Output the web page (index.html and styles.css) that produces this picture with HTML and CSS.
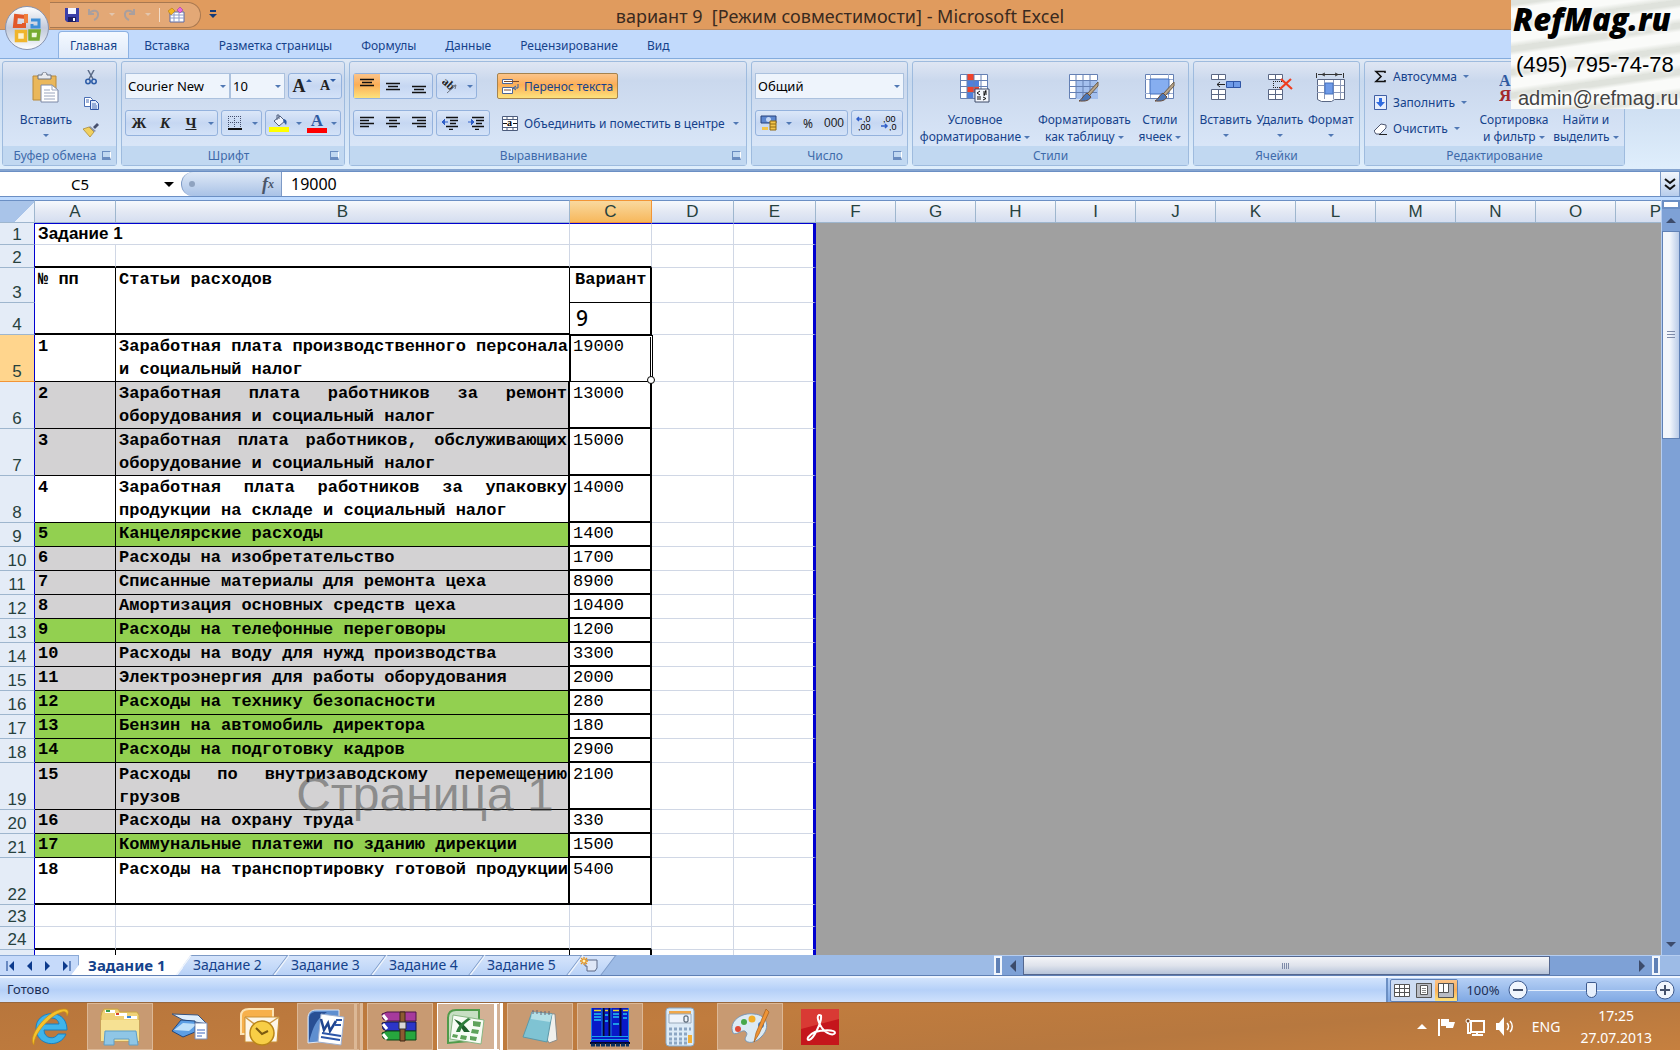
FILE: index.html
```html
<!DOCTYPE html>
<html lang="ru">

<head>
  <meta charset="UTF-8">
  <meta name="viewport" content="width=device-width, initial-scale=1.0">
  <title>вариант 9 - Microsoft Excel</title>
  <link rel="stylesheet" href="styles.css">
</head>

<body>
  <header class="titlebar">
    <div class="quick">
      <button aria-label="Сохранить"><svg width="14" height="14" viewBox="0 0 14 14"><path d="M0 0h14v14H2L0 12z" fill="#3b3fa8"/><path d="M3 0h8v6H3z" fill="#f4f6ff"/><path d="M3 9h8v5H3z" fill="#1d1f66"/><path d="M8 10h2v3H8z" fill="#fff"/></svg></button>
      <button aria-label="Отменить"><svg width="14" height="14" viewBox="0 0 14 14"><path d="M2 1v5h5M2 6c3-5 10-4 9 1 0 2-2 4-4 5" fill="none" stroke="#a99f9e" stroke-width="2"/></svg></button>
      <span class="caret pale"></span>
      <button aria-label="Вернуть"><svg width="14" height="14" viewBox="0 0 14 14"><path d="M11 1v5H6M11 6C8 1 1 2 2 7c0 2 2 4 4 5" fill="none" stroke="#a99f9e" stroke-width="2"/></svg></button>
      <span class="caret pale"></span>
      <span class="quick-line"></span>
      <button aria-label="Форма"><svg width="18" height="16" viewBox="0 0 18 16"><path d="M2 5h14v10H2z" fill="#fff" stroke="#5b6aa6"/><path d="M2 8h14M2 11h14M6 5v10M11 5v10" stroke="#8f9bc8"/><path d="M0 4l4-3 3 3-4 4z" fill="#f5b51e" stroke="#b07a10" stroke-width=".6"/><path d="M9 3l3-3 3 3-3 3z" fill="#e66be0" stroke="#a23ba0" stroke-width=".6"/></svg></button>
    </div>
    <button class="quick-more" aria-label="Настройка панели"><svg width="8" height="9"><path d="M1 1h6" stroke="#123a78" stroke-width="2"/><path d="M0 4h8L4 8z" fill="#123a78"/></svg></button>
    <h1>вариант 9&nbsp; [Режим совместимости] - Microsoft Excel</h1>
  </header>

  <button class="office" aria-label="Office">
    <svg width="46" height="46" viewBox="0 0 46 46">
      <defs>
        <linearGradient id="orb" x1="0" y1="0" x2="0" y2="1"><stop offset="0" stop-color="#fff"/><stop offset=".5" stop-color="#c3cadb"/><stop offset=".7" stop-color="#d5dce8"/><stop offset="1" stop-color="#fff"/></linearGradient>
      </defs>
      <circle cx="23" cy="23" r="21.500" fill="url(#orb)" stroke="#8793ae"/>
      <path d="M22 12l-10-1-1 10h9v-3" fill="none" stroke="#e2582a" stroke-width="4"/>
      <path d="M20 9h4v9h-4z" fill="#f0803c"/>
      <path d="M27 15h8v7h-7v-3" fill="none" stroke="#3d8fd8" stroke-width="3"/>
      <path d="M12.500 26.500h9v9h-9z" fill="#fdf3cf" stroke="#f0b52c" stroke-width="3.500"/>
      <path d="M26 26h9l-1 8h-8z" fill="#eef7dc" stroke="#76ab30" stroke-width="3.500"/>
    </svg>
  </button>

  <nav class="tabs">
    <a href="#" class="active">Главная</a>
    <a href="#">Вставка</a>
    <a href="#">Разметка страницы</a>
    <a href="#">Формулы</a>
    <a href="#">Данные</a>
    <a href="#">Рецензирование</a>
    <a href="#">Вид</a>
  </nav>

  <section class="ribbon">
    <div class="group g-clip">
      <div class="tools">
        <button class="big">
          <svg width="28" height="32" viewBox="0 0 28 32"><path d="M1 4h23v24H1z" fill="#eab75a" stroke="#b98a3a"/><path d="M6 3h4c0-4 5-4 5 0h4v4H6z" fill="#e9ebef" stroke="#6b7280"/><path d="M9 13h11l6 5v12H9z" fill="#fff" stroke="#7c88a5"/><path d="M20 13v5h6M12 18h6M12 21h11M12 24h11M12 27h11" fill="none" stroke="#9aa5bd"/></svg>
          <span>Вставить</span><span class="caret"></span>
        </button>
        <div class="stack">
          <button aria-label="Вырезать"><svg width="12" height="15" viewBox="0 0 12 15"><path d="M3 0l5 9M9 0L4 9" stroke="#5a6a86" stroke-width="1.500"/><circle cx="3" cy="11.500" r="2.200" fill="none" stroke="#2f5ea8" stroke-width="1.600"/><circle cx="9" cy="11.500" r="2.200" fill="none" stroke="#2f5ea8" stroke-width="1.600"/></svg></button>
          <button aria-label="Копировать"><svg width="15" height="13" viewBox="0 0 15 13"><path d="M.5.500h6l2 2v7h-8z" fill="#fff" stroke="#4a6fb5"/><path d="M6.500 3.500h5l3 3v6h-8z" fill="#dfe9fb" stroke="#2f55a5"/><path d="M2 3h3M2 5h3M8 7h4M8 9h5M8 11h5" stroke="#4a6fb5"/></svg></button>
          <button aria-label="Формат по образцу"><svg width="16" height="14" viewBox="0 0 16 14"><path d="M10 4l4-4 2 2-4 4z" fill="#47506e"/><path d="M7 3l6 5-2 1-5-5z" fill="#8d94a8"/><path d="M0 6l6-2 5 5-4 5z" fill="#f0d060" stroke="#a5822a" stroke-width=".7"/></svg></button>
        </div>
      </div>
      <div class="caption"><span>Буфер обмена</span><button class="launch" aria-label="Буфер обмена"></button></div>
    </div>

    <div class="group g-font">
      <div class="tools rows">
        <div class="line">
          <div class="combo-pair">
            <div class="combo c-font"><select aria-label="Шрифт"><option>Courier New</option></select></div>
            <div class="combo c-size"><select aria-label="Размер"><option>10</option></select></div>
          </div>
          <div class="set push">
            <button class="serif grow-a" aria-label="Увеличить размер">A<span class="tri up"></span></button>
            <button class="serif shrink-a" aria-label="Уменьшить размер">A<span class="tri"></span></button>
          </div>
        </div>
        <div class="line">
          <div class="set">
            <button class="serif">Ж</button><button class="serif it">К</button><button class="serif un">Ч</button>
            <span class="caret"></span>
          </div>
          <div class="set">
            <button aria-label="Границы"><svg width="14" height="14" viewBox="0 0 14 14"><path d="M.5 0v13M6.500 0v13M12.500 0v13M0 .5h13M0 6.500h13" stroke="#44506e" stroke-dasharray="1 1"/><path d="M0 13h14" stroke="#111" stroke-width="2"/></svg></button>
            <span class="caret"></span>
          </div>
          <div class="set">
            <button aria-label="Цвет заливки"><svg width="20" height="19" viewBox="0 0 20 19"><path d="M5 7l6-5 5 5-6 5z" fill="#eef2fa" stroke="#51607f"/><path d="M8 6V1h2v4" fill="none" stroke="#51607f"/><path d="M15 5c3 1 3 3 2 6l-3-4z" fill="#2f5ea8"/><path d="M0 13h20v5H0z" fill="#ff0"/></svg></button>
            <span class="caret"></span>
            <button aria-label="Цвет текста" class="serif font-color">A</button>
            <span class="caret"></span>
          </div>
        </div>
      </div>
      <div class="caption"><span>Шрифт</span><button class="launch" aria-label="Шрифт"></button></div>
    </div>

    <div class="group g-align">
      <div class="tools">
        <div class="rows">
          <div class="line">
            <div class="set">
              <button class="on" aria-label="По верхнему краю"><svg width="16" height="16"><path d="M1 1.500h14M3 4.500h10M1 7.500h14" stroke="#111" stroke-width="1.500"/></svg></button>
              <button aria-label="По середине"><svg width="16" height="16"><path d="M1 5.500h14M3 8.500h10M1 11.500h14" stroke="#111" stroke-width="1.500"/></svg></button>
              <button aria-label="По нижнему краю"><svg width="16" height="16"><path d="M1 8.500h14M3 11.500h10M1 14.500h14" stroke="#111" stroke-width="1.500"/></svg></button>
            </div>
            <div class="set">
              <button aria-label="Ориентация"><svg width="16" height="16" viewBox="0 0 16 16"><text x="-1" y="9" font-family="Liberation Serif" font-size="12" font-weight="bold" transform="rotate(42 5 7)" fill="#222">ab</text><path d="M5 15l9-8M14 7l-4 1M14 7l-1 4" fill="none" stroke="#6d7480"/></svg></button>
              <span class="caret"></span>
            </div>
          </div>
          <div class="line">
            <div class="set">
              <button aria-label="По левому краю"><svg width="16" height="14"><path d="M1 1.500h14M1 4.500h9M1 7.500h14M1 10.500h9" stroke="#111" stroke-width="1.500"/></svg></button>
              <button aria-label="По центру"><svg width="16" height="14"><path d="M1 1.500h14M4 4.500h8M1 7.500h14M4 10.500h8" stroke="#111" stroke-width="1.500"/></svg></button>
              <button aria-label="По правому краю"><svg width="16" height="14"><path d="M1 1.500h14M6 4.500h9M1 7.500h14M6 10.500h9" stroke="#111" stroke-width="1.500"/></svg></button>
            </div>
            <div class="set">
              <button aria-label="Уменьшить отступ"><svg width="16" height="14"><path d="M4 1.500h12M8 4.500h8M8 7.500h6M4 10.500h12M7 13.500h4" stroke="#111" stroke-width="1.500"/><path d="M6 6H1M3 3L0 6l3 3" stroke="#2f5ec8" fill="#2f5ec8"/></svg></button>
              <button aria-label="Увеличить отступ"><svg width="16" height="14"><path d="M4 1.500h12M8 4.500h8M8 7.500h6M4 10.500h12M7 13.500h4" stroke="#111" stroke-width="1.500"/><path d="M0 6h5M3 3l3 3-3 3" stroke="#2f5ec8" fill="#2f5ec8"/></svg></button>
            </div>
          </div>
        </div>
        <div class="rule"></div>
        <div class="rows">
          <button class="wide on">
            <svg width="17" height="17" viewBox="0 0 17 17"><path d="M.5 1.500h10v4H.5zM.5 9.500h10v6H.5z" fill="#fff" stroke="#4c6596"/><path d="M2 3.500h15M2 12h7" stroke="#7a4a2a"/><path d="M16 6v4h-4M14 8l-3 2 3 2" fill="none" stroke="#2f5ea8"/></svg>
            Перенос текста
          </button>
          <button class="wide">
            <svg width="17" height="15" viewBox="0 0 17 15"><path d="M.5.500h15v14H.5z" fill="#fff" stroke="#4c5c7c"/><path d="M0 3.500h16M0 11.500h16M5 0v3M11 0v3M5 12v3M11 12v3" stroke="#4c5c7c"/><path d="M1 7.500h4M11 7.500h4" stroke="#111"/><text x="5" y="10" font-family="Liberation Serif" font-size="10" font-weight="bold">a</text></svg>
            Объединить и поместить в центре <span class="caret"></span>
          </button>
        </div>
      </div>
      <div class="caption"><span>Выравнивание</span><button class="launch" aria-label="Выравнивание"></button></div>
    </div>

    <div class="group g-num">
      <div class="tools rows">
        <div class="combo"><select aria-label="Числовой формат"><option>Общий</option></select></div>
        <div class="line">
          <div class="set">
            <button aria-label="Денежный формат"><svg width="18" height="16" viewBox="0 0 18 16"><path d="M1 1h15v7H1z" fill="#5d87cf" stroke="#28427c"/><circle cx="8.500" cy="4.500" r="2.500" fill="#c3d6f5"/><path d="M10 6h6v9h-6z" fill="#f3c54a" stroke="#8f6a14"/><path d="M10 9h6M10 12h6" stroke="#8f6a14"/><path d="M2 12h6v3H2z" fill="#f3c54a"/></svg></button>
            <span class="caret"></span>
            <button class="sym">%</button>
            <button class="sym narrow">000</button>
          </div>
          <div class="set">
            <button class="digits" aria-label="Увеличить разрядность"><svg width="17" height="16" viewBox="0 0 17 16"><path d="M6 4H1M3 2L1 4l2 2" fill="none" stroke="#2f5ec8" stroke-width="1.500"/><text x="7" y="7" font-family="Liberation Sans" font-size="9">,0</text><text x="2" y="15" font-family="Liberation Sans" font-size="9">,00</text></svg></button>
            <button class="digits" aria-label="Уменьшить разрядность"><svg width="17" height="16" viewBox="0 0 17 16"><text x="2" y="7" font-family="Liberation Sans" font-size="9">,00</text><path d="M0 11h6M4 9l2 2-2 2" fill="none" stroke="#2f5ec8" stroke-width="1.500"/><text x="8" y="15" font-family="Liberation Sans" font-size="9">,0</text></svg></button>
          </div>
        </div>
      </div>
      <div class="caption"><span>Число</span><button class="launch" aria-label="Число"></button></div>
    </div>

    <div class="group g-style">
      <div class="tools">
        <button class="big">
          <svg width="30" height="30" viewBox="0 0 30 30"><path d="M.5 1.500h27v24H.5z" fill="#fff" stroke="#6480b4"/><path d="M7 1h7v6H7zM7 13h12v6H7z" fill="#f0432b"/><path d="M7 7h12v6H7zM7 19h6v6H7z" fill="#4f80dc"/><path d="M0 7.500h27M0 13.500h27M0 19.500h27M7 1v24M14 1v24M21 1v24" stroke="#6480b4"/><path d="M15 16h14v13H15z" fill="#f3f6fc" stroke="#3c4a68"/><path d="M20 18l-3 2 3 2M17 24h4M17 26h4M23 19h4M23 21h4M26 17l-2 6M23 24l3 1.500-3 1.500" fill="none" stroke="#111"/></svg>
          <span>Условное</span><span>форматирование <i class="caret"></i></span>
        </button>
        <button class="big">
          <svg width="30" height="30" viewBox="0 0 30 30"><path d="M.5 1.500h28v24H.5z" fill="#fff" stroke="#6480b4"/><path d="M7 7h22v19H7z" fill="#a4c0ee"/><path d="M0 7.500h28M0 13.500h28M0 19.500h28M7 1v24M14 1v24M21 1v24" stroke="#6480b4"/><path d="M29 9L18 21l2 2 9-10z" fill="#b9a58a" stroke="#6a5c48"/><path d="M18 20l4 4c-3 5-8 4-12 4 4-2 4-6 8-8z" fill="#4a76b8" stroke="#6a4b35"/></svg>
          <span>Форматировать</span><span>как таблицу <i class="caret"></i></span>
        </button>
        <button class="big">
          <svg width="30" height="30" viewBox="0 0 30 30"><path d="M.5 1.500h28v24H.5z" fill="#fff" stroke="#6480b4"/><path d="M0 6.500h28M0 20.500h28M5.500 1v24M23.500 1v24" stroke="#9aaccf"/><path d="M5 6h19v15H5z" fill="#86aef0" stroke="#4470bd"/><path d="M29 9L18 21l2 2 9-10z" fill="#b9a58a" stroke="#6a5c48"/><path d="M18 20l4 4c-3 5-8 4-12 4 4-2 4-6 8-8z" fill="#4a76b8" stroke="#6a4b35"/></svg>
          <span>Стили</span><span>ячеек <i class="caret"></i></span>
        </button>
      </div>
      <div class="caption"><span>Стили</span></div>
    </div>

    <div class="group g-cells">
      <div class="tools">
        <button class="big">
          <svg width="30" height="30" viewBox="0 0 30 30"><path d="M.5 1.500h14v5H.5zM.5 16.500h14v10H.5z" fill="#fff" stroke="#5a6784"/><path d="M7.500 1v5M7.500 16v10M0 21.500h15" stroke="#5a6784"/><path d="M15.500 8.500h14v6h-14z" fill="#6f9be8" stroke="#2f55a5"/><path d="M22.500 8v7" stroke="#2f55a5"/><path d="M14 11.500H6M9 9l-3 2.500L9 14" fill="none" stroke="#222"/></svg>
          <span>Вставить</span><span class="caret"></span>
        </button>
        <button class="big">
          <svg width="30" height="30" viewBox="0 0 30 30"><path d="M3.500 1.500h14v5h-14zM3.500 16.500h14v10h-14z" fill="#fff" stroke="#5a6784"/><path d="M10.500 1v5M10.500 16v10M3 21.500h15" stroke="#5a6784"/><path d="M8 8.500h9M8 14.500h9M8.500 8v7" stroke="#222" stroke-dasharray="1 1"/><path d="M16 6l11 10M26 6L15 16" stroke="#ee3d20" stroke-width="2.200"/></svg>
          <span>Удалить</span><span class="caret"></span>
        </button>
        <button class="big">
          <svg width="32" height="30" viewBox="0 0 32 30"><path d="M2.500 6.500h27v20h-10l-3 2h-10l-4-2z" fill="#fff" stroke="#5a6784"/><path d="M2 12.500h27M2 19.500h27M9.500 7v19M18.500 7v19M25.500 7v19" stroke="#8c99b8"/><path d="M10 10h8v11h-8z" fill="#6f9be8" stroke="#4470bd"/><path d="M1.500 0v5M28.500 0v5M3 1.500h24M10 0l-3 1.500L10 3M20 0l3 1.500L20 3" fill="none" stroke="#333"/></svg>
          <span>Формат</span><span class="caret"></span>
        </button>
      </div>
      <div class="caption"><span>Ячейки</span></div>
    </div>

    <div class="group g-edit">
      <div class="tools">
        <div class="stack text">
          <button><svg width="13" height="15"><path d="M11 4V2.500H2l5 5-5 5h9V11" fill="none" stroke="#111" stroke-width="1.600"/></svg>Автосумма <i class="caret"></i></button>
          <button><svg width="13" height="15"><path d="M.5.500h12v14H.5z" fill="#e7eefb" stroke="#3f5fa5"/><path d="M5 3h3v4h3l-4.500 5L2 7h3z" fill="#2f6be0"/></svg>Заполнить <i class="caret"></i></button>
          <button><svg width="13" height="13"><path d="M0 9l7-7 5 1v3l-6 6H2z" fill="#fff" stroke="#4d5670"/><path d="M5 12.500h8" stroke="#222"/></svg>Очистить <i class="caret"></i></button>
        </div>
        <button class="big">
          <svg width="30" height="30" viewBox="0 0 30 30"><text x="0" y="13" font-family="Liberation Serif" font-size="16" font-weight="bold" fill="#2f5aa0">А</text><text x="0" y="28" font-family="Liberation Serif" font-size="17" font-weight="bold" fill="#a3272a">Я</text><path d="M13 5h8v18h-5V8z" fill="#dcd6dc" stroke="#9d95a5"/></svg>
          <span>Сортировка</span><span>и фильтр <i class="caret"></i></span>
        </button>
        <button class="big">
          <svg width="30" height="30"></svg>
          <span>Найти и</span><span>выделить <i class="caret"></i></span>
        </button>
      </div>
      <div class="caption"><span>Редактирование</span></div>
    </div>
  </section>

  <div class="stamp">
    <strong>RefMag.ru</strong>
    <span class="phone">(495) 795-74-78</span>
    <span class="mail">admin@refmag.ru</span>
  </div>

  <div class="formula">
    <div class="namebox"><input type="text" value="C5" aria-label="Имя"><span class="caret black"></span></div>
    <div class="fx"><span class="dot"></span><button aria-label="Вставить функцию"><i>f</i><sub>x</sub></button></div>
    <input class="value" type="text" value="19000" aria-label="Строка формул">
    <button class="expand" aria-label="Развернуть"><svg width="12" height="12"><path d="M1 1l5 4 5-4M1 7l5 4 5-4" fill="none" stroke="#111" stroke-width="2"/></svg></button>
  </div>

  <main class="work">
    <div class="sheet">
      <table>
        <colgroup>
          <col class="w-num"><col class="w-a"><col class="w-b"><col class="w-c"><col class="w-c"><col class="w-c">
          <col span="11" class="w-rest">
        </colgroup>
        <thead>
          <tr>
            <th class="corner"></th><th>A</th><th>B</th><th class="sel">C</th><th>D</th><th>E</th><th>F</th><th>G</th><th>H</th><th>I</th><th>J</th><th>K</th><th>L</th><th>M</th><th>N</th><th>O</th><th>P</th>
          </tr>
        </thead>
        <tbody>
          <tr class="first"><th>1</th><td class="title" colspan="2">Задание 1</td><td></td><td></td><td></td></tr>
          <tr class="h23"><th>2</th><td class="bb2"></td><td class="bb2"></td><td class="bb2"></td><td></td><td></td></tr>
          <tr class="h35 head"><th>3</th><td class="k bb2" rowspan="2">№ пп</td><td class="k bb2" rowspan="2">Статьи расходов</td><td class="k br2 variant">Вариант</td><td></td><td></td></tr>
          <tr class="h32"><th>4</th><td class="k br2 nine">9</td><td></td><td></td></tr>
          <tr class="h47"><th class="sel">5</th><td class="k">1</td><td class="k left">Заработная плата производственного персонала и социальный налог</td><td class="v active">19000<span class="frame"></span></td><td></td><td></td></tr>
          <tr class="h47 gray"><th>6</th><td class="k">2</td><td class="k t">Заработная плата работников за ремонт оборудования и социальный налог</td><td class="v">13000</td><td></td><td></td></tr>
          <tr class="h47 gray"><th>7</th><td class="k">3</td><td class="k t">Заработная плата работников, обслуживающих оборудование и социальный налог</td><td class="v">15000</td><td></td><td></td></tr>
          <tr class="h47"><th>8</th><td class="k">4</td><td class="k t">Заработная плата работников за упаковку продукции на складе и социальный налог</td><td class="v">14000</td><td></td><td></td></tr>
          <tr class="green"><th>9</th><td class="k">5</td><td class="k t">Канцелярские расходы</td><td class="v">1400</td><td></td><td></td></tr>
          <tr class="gray"><th>10</th><td class="k">6</td><td class="k t">Расходы на изобретательство</td><td class="v">1700</td><td></td><td></td></tr>
          <tr class="gray"><th>11</th><td class="k">7</td><td class="k t">Списанные материалы для ремонта цеха</td><td class="v">8900</td><td></td><td></td></tr>
          <tr class="gray"><th>12</th><td class="k">8</td><td class="k t">Амортизация основных средств цеха</td><td class="v">10400</td><td></td><td></td></tr>
          <tr class="green"><th>13</th><td class="k">9</td><td class="k t">Расходы на телефонные переговоры</td><td class="v">1200</td><td></td><td></td></tr>
          <tr class="gray"><th>14</th><td class="k">10</td><td class="k t">Расходы на воду для нужд производства</td><td class="v">3300</td><td></td><td></td></tr>
          <tr class="gray"><th>15</th><td class="k">11</td><td class="k t">Электроэнергия для работы оборудования</td><td class="v">2000</td><td></td><td></td></tr>
          <tr class="green"><th>16</th><td class="k">12</td><td class="k t">Расходы на технику безопасности</td><td class="v">280</td><td></td><td></td></tr>
          <tr class="green"><th>17</th><td class="k">13</td><td class="k t">Бензин на автомобиль директора</td><td class="v">180</td><td></td><td></td></tr>
          <tr class="green"><th>18</th><td class="k">14</td><td class="k t">Расходы на подготовку кадров</td><td class="v">2900</td><td></td><td></td></tr>
          <tr class="h47 gray"><th>19</th><td class="k">15</td><td class="k t">Расходы по внутризаводскому перемещению грузов</td><td class="v">2100</td><td></td><td></td></tr>
          <tr class="gray"><th>20</th><td class="k">16</td><td class="k t">Расходы на охрану труда</td><td class="v">330</td><td></td><td></td></tr>
          <tr class="green"><th>21</th><td class="k">17</td><td class="k t">Коммунальные платежи по зданию дирекции</td><td class="v">1500</td><td></td><td></td></tr>
          <tr class="h47"><th>22</th><td class="k bb2">18</td><td class="k t left oneline bb2">Расходы на транспортировку готовой продукции</td><td class="v">5400</td><td></td><td></td></tr>
          <tr class="h22"><th>23</th><td></td><td></td><td></td><td></td><td></td></tr>
          <tr class="h23"><th>24</th><td class="bb2"></td><td class="bb2"></td><td class="bb2"></td><td></td><td></td></tr>
          <tr class="head"><th></th><td class="k"></td><td class="k"></td><td class="k br2"></td><td></td><td></td></tr>
        </tbody>
      </table>
      <div class="page-mark">Страница 1</div>
    </div>
    <div class="vscroll">
      <span class="split"></span>
      <button aria-label="Вверх"><span class="tri up"></span></button>
      <div class="thumb"></div>
      <div class="track"></div>
      <button aria-label="Вниз"><span class="tri"></span></button>
    </div>
  </main>

  <div class="sheetbar">
    <div class="steps">
      <button aria-label="Первый лист"><svg width="10" height="10"><path d="M2 0v10" stroke="#0c3a8c" stroke-width="1"/><path d="M9 0v10L4 5z" fill="#0c3a8c"/></svg></button>
      <button aria-label="Назад"><svg width="10" height="10"><path d="M8 0v10L3 5z" fill="#0c3a8c"/></svg></button>
      <button aria-label="Вперёд"><svg width="10" height="10"><path d="M2 0v10l5-5z" fill="#0c3a8c"/></svg></button>
      <button aria-label="Последний лист"><svg width="10" height="10"><path d="M8 0v10" stroke="#0c3a8c" stroke-width="1"/><path d="M1 0v10l5-5z" fill="#0c3a8c"/></svg></button>
    </div>
    <nav class="leaves">
      <a href="#" class="active">Задание 1</a>
      <a href="#">Задание 2</a>
      <a href="#">Задание 3</a>
      <a href="#">Задание 4</a>
      <a href="#">Задание 5</a>
      <a href="#" class="add" aria-label="Вставить лист"><svg width="18" height="15" viewBox="0 0 18 15"><path d="M5 3h12v8l-2 3H7V9H5z" fill="#dfe7f7" stroke="#5a6784"/><path d="M4 0v8M0 4h8M1 1l6 6M7 1L1 7" stroke="#e8951c" stroke-width="1.300"/><circle cx="4" cy="4" r="1.500" fill="#fff3c0"/></svg></a>
    </nav>
    <div class="hscroll">
      <span class="split"></span>
      <button aria-label="Влево"><span class="tri left"></span></button>
      <div class="thumb"></div>
      <div class="track"></div>
      <button aria-label="Вправо"><span class="tri right"></span></button>
      <span class="split"></span>
    </div>
  </div>

  <footer class="status">
    <div class="ready">Готово</div>
    <div class="zoom">
      <div class="views">
        <button aria-label="Обычный"><svg width="16" height="13"><path d="M.5.500h15v12H.5z" fill="#fff" stroke="#555"/><path d="M0 4.500h16M0 8.500h16M5.500 0v13M10.500 0v13" stroke="#555"/></svg></button>
        <button aria-label="Разметка страницы"><svg width="16" height="15"><path d="M.5.500h15v14H.5z" fill="#b9bcc4" stroke="#555"/><path d="M4.500 2.500h7v9h-7z" fill="#fff" stroke="#555"/><path d="M6 5.500h4M6 7.500h4M6 9.500h4" stroke="#888"/></svg></button>
        <button class="on" aria-label="Страничный"><svg width="16" height="15"><path d="M.5.500h15v14H.5z" fill="#b9bcc4" stroke="#555"/><path d="M.5.500h5v9h-5zM5.500.500h5v9h-5z" fill="#fff" stroke="#555"/></svg></button>
      </div>
      <label for="zoom">100%</label>
      <button class="round" aria-label="Уменьшить"><svg width="20" height="20"><circle cx="10" cy="10" r="9" fill="#f0f5fd" stroke="#3d5a8e"/><path d="M5 10h10" stroke="#44516c" stroke-width="2"/></svg></button>
      <input type="range" id="zoom" min="0" max="200" value="100">
      <button class="round" aria-label="Увеличить"><svg width="20" height="20"><circle cx="10" cy="10" r="9" fill="#f0f5fd" stroke="#3d5a8e"/><path d="M5 10h10M10 5v10" stroke="#44516c" stroke-width="2"/></svg></button>
    </div>
  </footer>

  <div class="taskbar">
    <div class="apps">
      <button aria-label="Internet Explorer"><svg width="40" height="40" viewBox="0 0 40 40"><path d="M37 23H14c0 9 11 10 14 4h8C30 42 6 39 6 21 6 3 37 0 37 23zM14 17h15c-1-8-14-8-15 0z" fill="#3fb4ea" stroke="#1b7fc0"/><path d="M4 38C-4 30 18 2 34 2c5 0 5 3 3 7 0-4-2-5-5-4C20 8 3 28 4 38z" fill="#f6c22c" stroke="#c98e13" stroke-width=".7"/></svg></button>
      <button class="open" aria-label="Проводник"><svg width="40" height="40" viewBox="0 0 40 40"><path d="M2 5l2-3h14l2 3h17l2 3v26H1V9z" fill="#f0d277" stroke="#c9a544"/><path d="M5 3h10v3H5z" fill="#fff"/><path d="M6 3h4v2H6z" fill="#3b9c49"/><path d="M15 6h12v3H15z" fill="#fff"/><path d="M16 6h3v2h-3z" fill="#d9442f"/><path d="M24 9h13v3H24z" fill="#fff"/><path d="M27 9h4v2h-4z" fill="#3a85d8"/><path d="M1 13h38v21H1z" fill="#f6e193"/><path d="M5 24h31l2 14h-9v-6H14v6H4z" fill="#8fc6e6" stroke="#5f9fc8"/></svg></button>
      <button aria-label="Сканер"><svg width="38" height="32" viewBox="0 0 38 32"><path d="M1 3l26 1 9 9-24-4z" fill="#dfeefc" stroke="#38547e"/><path d="M10 9L1 20l11 6 12-5V10z" fill="#5c9ee4" stroke="#23477e"/><path d="M3 19l9-7 14 1-8 7z" fill="#bfe0fa"/><path d="M24 12h12v16H24z" fill="#fff" stroke="#7a8db5"/><path d="M26 19h8M26 22h8M26 25h5" stroke="#3c66c0"/></svg></button>
      <button aria-label="Outlook"><svg width="40" height="38" viewBox="0 0 40 38"><path d="M1 8c0-5 3-7 8-7h24v25H1z" fill="#f7b04b" stroke="#fce3b4" stroke-width="2"/><path d="M5 9h34l-2 25H5z" fill="#fdf6e8" stroke="#c98f35"/><path d="M5 9l16 12L39 9" fill="none" stroke="#cf9a45" stroke-width="1.500"/><circle cx="22" cy="25" r="12" fill="#f8ce46" stroke="#b98517" stroke-width="1.500"/><path d="M16 20l6 6 6-3" fill="none" stroke="#7c5a10" stroke-width="2"/></svg></button>
      <button class="open multi" aria-label="Word"><svg width="38" height="38" viewBox="0 0 38 38"><path d="M1 35V10c0-5 3-8 8-8h23v30z" fill="#5f8fd0" stroke="#dfe9f7"/><path d="M2 34C6 20 8 12 20 4H9c-5 0-7 3-7 7z" fill="#284f94"/><path d="M14 6l23 3-3 28-23-3z" fill="#fff" stroke="#9fb0d0"/><path d="M14 11l3 11 4-7 2 8 6-10" fill="none" stroke="#1f4590" stroke-width="2.500"/><path d="M29 12h6M28 17h6M15 25l19 3M14 29l19 3" stroke="#2c56a8" stroke-width="2"/></svg></button>
      <button class="open" aria-label="WinRAR"><svg width="38" height="32" viewBox="0 0 38 32"><path d="M1 3l5-2h29v9H6L2 8z" fill="#a63a9c" stroke="#4c1448"/><path d="M1 12l5-1h29v9H6l-4-2z" fill="#2c35c8" stroke="#10144c"/><path d="M1 22l5-2h29v9H6l-4-2z" fill="#27a63e" stroke="#0d4417"/><path d="M2 4l4 5M2 13l4 5M2 23l4 5" stroke="#fff" stroke-width="3"/><path d="M19 1h5v29h-5z" fill="#8c5a32" stroke="#3e2614"/><path d="M18 11h7v7h-7z" fill="#d8d8d8" stroke="#333"/></svg></button>
      <button class="open multi front" aria-label="Excel"><svg width="38" height="38" viewBox="0 0 38 38"><path d="M1 35V10c0-5 3-8 8-8h23v30z" fill="#c7dfc3" stroke="#4f9b4a" stroke-width="2"/><path d="M6 7l31 5-3 24-31-5z" fill="#f7fcf5" stroke="#87b784"/><path d="M7 11c8 3 12 8 16 13h-6c-3-5-6-8-10-13z" fill="#1f5f2c"/><path d="M21 10c-7 5-10 8-12 14h4c2-6 5-9 11-13z" fill="#2f7f3c"/><path d="M26 13l8 1-1 5-7-1zM25 21l7 1-1 4-7-1zM23 28l7 1-1 4-6-1zM14 27l6 1-1 4-6-1zM6 26l5 1-1 3-5-1z" fill="#5fa35a"/></svg></button>
      <button class="open" aria-label="Блокнот"><svg width="38" height="36" viewBox="0 0 38 36"><path d="M11 3l23 2 2 26-8 3z" fill="#f0f0ec" stroke="#8c8c88"/><path d="M11 3l20 2-5 28-24-5z" fill="#7fc3d3" stroke="#5d98a8"/><path d="M11 3l20 2-2 8-19-3z" fill="#b4dfe6"/><path d="M12 1v4M16 1v4M20 2v4M24 2v4M28 2v4" stroke="#667"/></svg></button>
      <button class="open" aria-label="Книги"><svg width="40" height="40" viewBox="0 0 40 40"><path d="M1 1h38v34H1z" fill="#0818c8"/><path d="M1 29.500h38M1 32.500h38" stroke="#19a3e8"/><path d="M13.500 1v28M19.500 1v28M30.500 1v28" stroke="#05062a" stroke-width="2"/><path d="M1.500 1v33M12 1v28M21 1v28M38.500 1v33" stroke="#1c7fe0"/><path d="M4 3.500h7M15 3.500h3M23 3.500h6M33 3.500h5" stroke="#e8d72a" stroke-width="1.500"/><path d="M4 7h7M4 10h7M4 13h7M15 8h3M23 7h6M23 10h6M33 7h4M15 14h3M23 17h6M33 11h4" stroke="#23c3f0" stroke-width="1.500"/><path d="M0 35h40v2H0z" fill="#05062a"/><path d="M1 38h38" stroke="#0a3060" stroke-width="3" stroke-dasharray="4 1"/></svg></button>
      <button aria-label="Калькулятор"><svg width="30" height="40" viewBox="0 0 30 40"><rect x="1" y="1" width="28" height="38" rx="3" fill="#dcebf7" stroke="#86a9c8"/><path d="M4 4h22v3H4z" fill="#f0a84a"/><path d="M4 7h22v9H4z" fill="#eef4fb" stroke="#9ab"/><rect x="19" y="9" width="4" height="6" rx="1" fill="none" stroke="#345"/><path d="M4 22h22M4 27h18M4 32h18M4 36h18" stroke="#8ba6c3" stroke-width="3" stroke-dasharray="3 2"/><path d="M23 28h4v8h-4z" fill="#f2b03a"/></svg></button>
      <button class="open" aria-label="Paint"><svg width="40" height="36" viewBox="0 0 40 36"><path d="M3 24C-2 12 12 3 24 5c14 1 16 14 8 22-5 6-12 8-16 5-3-3 3-6 0-9-3-4-9 4-13 1z" fill="#dceaf4" stroke="#7b98b4"/><circle cx="8" cy="20" r="3" fill="#e04a36"/><circle cx="14" cy="13" r="3" fill="#48a84a"/><circle cx="22" cy="10" r="3.500" fill="#f2ae28"/><circle cx="31" cy="16" r="3" fill="#3d7fd0"/><path d="M36 0L26 24l-2 9 5-8L39 3z" fill="#ef9436" stroke="#a55d17" stroke-width=".7"/></svg></button>
      <button aria-label="Acrobat"><svg width="38" height="36" viewBox="0 0 38 36"><path d="M0 0h38v36H0z" fill="#c5161c"/><path d="M0 0h38v10L0 20z" fill="#d93a34"/><path d="M18 6c-3 1 0 9 3 13 4 6 12 8 13 5 0-4-14-3-20-1-7 3-9 8-6 8 5-1 13-19 12-24 0-1-1-1-2-1z" fill="none" stroke="#fff" stroke-width="2"/></svg></button>
    </div>
    <div class="tray">
      <span class="tri up white"></span>
      <svg width="18" height="20"><path d="M2 2v17" stroke="#fff" stroke-width="2"/><path d="M4 2h8v3h6l-2 6H9V9H4z" fill="#fff"/></svg>
      <svg width="20" height="18"><path d="M6 3h13v11H6zM12 14v3M7 17h11M3 5v10h3" fill="none" stroke="#fff" stroke-width="2"/><circle cx="3" cy="3" r="2" fill="#7d4b22" stroke="#fff"/></svg>
      <svg width="20" height="20"><path d="M1 6h3l5-6v19l-5-6H1z" fill="#fff"/><path d="M12 6c2 2 2 5 0 7M15 4c3 3 3 8 0 11" fill="none" stroke="#fff" stroke-width="1.500"/></svg>
      <span class="lang">ENG</span>
      <div class="clock"><span>17:25</span><span>27.07.2013</span></div>
    </div>
  </div>
</body>

</html>
```
FILE: styles.css
```css
* {
  box-sizing: border-box;
}

body {
  margin: 0;
  height: 100vh;
  display: flex;
  flex-direction: column;
  overflow: hidden;
  position: relative;
  background-color: #bfdbff;
  font-family: "Noto Sans", "Open Sans", sans-serif;
  font-size: 12px;
  color: #15428b;
}

button {
  display: flex;
  align-items: center;
  justify-content: center;
  padding: 0;
  border: none;
  background: none;
  color: inherit;
  font: inherit;
}

input,
select {
  font: inherit;
}

svg {
  display: block;
  flex: none;
}

a {
  color: inherit;
  text-decoration: none;
}

.caret {
  display: inline-block;
  flex: none;
  border: 3px solid transparent;
  border-top-color: #5078b4;
  border-bottom: none;
  vertical-align: middle;
}

.caret.pale {
  border-top-color: #e3c6ae;
}

.caret.black {
  border-width: 5px;
  border-bottom: none;
  border-top-color: #000;
}

.tri {
  border: 5px solid transparent;
  border-top-color: #3c4b6b;
  border-bottom: none;
}

.tri.up {
  border-top: none;
  border-bottom: 5px solid #3c4b6b;
}

.tri.up.white {
  border-bottom-color: #fff;
}

.tri.left {
  border: 6px solid transparent;
  border-left: none;
  border-right-color: #3c4b6b;
}

.tri.right {
  border: 6px solid transparent;
  border-right: none;
  border-left-color: #3c4b6b;
}

/* title bar */
.titlebar {
  flex: none;
  display: flex;
  align-items: center;
  height: 30px;
  padding-left: 50px;
  background-color: #e09b5e;
  border-bottom: 1px solid #b98a62;
}

.titlebar h1 {
  flex: 1;
  margin: 0;
  padding: 2px 225px 0 0;
  text-align: center;
  font-size: 18px;
  font-weight: normal;
  color: #3a2a20;
}

.quick {
  display: flex;
  align-items: center;
  gap: 8px;
  width: 151px;
  height: 26px;
  padding-left: 15px;
  border: 1px solid #a87850;
  border-left: none;
  border-radius: 0 13px 13px 0;
  background-color: #e3a876;
}

.quick-line {
  width: 1px;
  height: 14px;
  background-color: #f3dcc8;
}

.quick-more {
  width: 24px;
  height: 14px;
}

.office {
  position: absolute;
  left: 4px;
  top: 5px;
}

/* ribbon tabs */
.tabs {
  flex: none;
  display: flex;
  align-items: flex-end;
  gap: 1px;
  height: 29px;
  padding-left: 58px;
  background-color: #c2dafc;
  border-bottom: 1px solid #84acdd;
}

.tabs a {
  padding: 5px 14px 0;
  height: 27px;
  line-height: 20px;
}

.tabs .active {
  padding: 4px 11px 0;
  border: 1px solid #8db2e3;
  border-bottom: none;
  border-radius: 4px 4px 0 0;
  background: linear-gradient(#f4f9ff, #dfe9f8);
}

/* ribbon */
.ribbon {
  flex: none;
  display: flex;
  gap: 4px;
  height: 112px;
  padding: 2px 2px 3px;
  background: linear-gradient(#e0e9f5, #c8d9ee 20%, #dfeefc);
  border-bottom: 2px solid #86a5d0;
}

.group {
  flex: none;
  display: flex;
  flex-direction: column;
  border: 1px solid #9ebbde;
  border-radius: 3px;
  background: linear-gradient(#dfe6f3, #cad8ed 18%, #d8e5f7 80%);
}

.g-clip {
  width: 115px;
}

.g-font {
  width: 224px;
}

.g-align {
  width: 398px;
}

.g-num {
  width: 157px;
}

.g-style {
  width: 277px;
}

.g-cells {
  width: 167px;
}

.g-edit {
  width: 261px;
}

.tools {
  flex: 1;
  display: flex;
  padding: 0 3px;
}

.rows {
  display: flex;
  flex-direction: column;
  gap: 11px;
  padding-top: 11px;
}

.line {
  display: flex;
  gap: 3px;
}

.push {
  margin-left: auto;
}

.caption {
  display: flex;
  align-items: center;
  height: 19px;
  padding: 0 5px;
  background-color: #c1d8f1;
  color: #3e6aaa;
}

.caption span {
  flex: 1;
  text-align: center;
}

.launch {
  width: 9px;
  height: 9px;
  border: 1px solid #6b8dc0;
  border-right-color: #fff;
  border-bottom: 3px solid #6b8dc0;
}

.set {
  display: flex;
  align-items: center;
  height: 26px;
  border: 1px solid #94b2dd;
  border-radius: 3px;
  background: linear-gradient(#dbe7f8, #c6d7f2 50%, #d3e2f8);
}

.set button {
  width: 26px;
  height: 24px;
}

.set .caret {
  margin: 0 3px 0 4px;
}

.set .digits {
  width: 25px;
}

.serif {
  font-family: "Liberation Serif", serif;
  font-weight: bold;
  font-size: 15px;
  color: #222;
}

.grow-a {
  font-size: 18px;
}

.shrink-a {
  font-size: 14px;
}

.grow-a .tri,
.shrink-a .tri {
  align-self: flex-start;
  margin-top: 5px;
  border-width: 3px;
  border-top-color: #2f5ea8;
  border-bottom-color: transparent;
}

.grow-a .tri {
  border-top-color: transparent;
  border-bottom: 3px solid #2f5ea8;
}

.it {
  font-style: italic;
}

.un {
  text-decoration: underline;
}

.set .font-color {
  width: 20px;
  height: 20px;
  margin-left: 2px;
  border-bottom: 5px solid #f00;
  color: #2f5aa0;
  font-size: 17px;
  line-height: 15px;
}

.sym {
  color: #222;
}

.narrow {
  font-family: "Liberation Sans", sans-serif;
}

.combo-pair {
  display: flex;
}

.combo {
  position: relative;
  height: 26px;
}

.combo select {
  width: 100%;
  height: 26px;
  padding: 0 2px;
  appearance: none;
  border: 1px solid #abc1de;
  border-radius: 0;
  background-color: #eef4fc;
  color: #000;
  font-size: 13px;
}

.combo::after {
  content: "";
  position: absolute;
  right: 4px;
  top: 12px;
  border: 3px solid transparent;
  border-top-color: #5078b4;
  border-bottom: none;
}

.c-font {
  width: 105px;
}

.c-size {
  width: 55px;
}

.on {
  background: linear-gradient(#fbc48a, #fcae57 45%, #fde27c);
}

.rule {
  width: 1px;
  height: 56px;
  margin: 14px 2px 0 5px;
  background-color: #9ebbde;
}

.wide {
  align-self: flex-start;
  gap: 5px;
  height: 26px;
  padding: 0 4px;
  border: 1px solid transparent;
  white-space: nowrap;
}

.wide .caret {
  margin-left: 3px;
}

.wide.on {
  border: 1px solid #a5834f;
  border-radius: 2px;
}

.big {
  flex: 1 0 auto;
  flex-direction: column;
  justify-content: flex-start;
  padding-top: 10px;
  line-height: 17px;
}

.big svg {
  height: 32px;
  margin-bottom: 7px;
}

.big > .caret {
  margin-top: 6px;
}

.g-clip .tools {
  padding-left: 6px;
}

.g-clip .big {
  flex: 0 0 74px;
}

.stack {
  display: flex;
  flex-direction: column;
  gap: 9px;
  padding-top: 7px;
}

.stack button {
  height: 17px;
}

.stack.text {
  padding: 6px 8px 0 6px;
}

.stack.text button {
  justify-content: flex-start;
  gap: 6px;
}

/* corner stamp over the window */
.stamp {
  position: absolute;
  right: 0;
  top: 0;
  width: 169px;
  height: 109px;
  overflow: hidden;
  display: flex;
  flex-direction: column;
  background: repeating-linear-gradient(172deg, #dfe2dc 0, #dfe2dc 5px, #fafbf9 9px, #fafbf9 18px, #e2e5df 23px);
  font-family: "Liberation Sans", sans-serif;
  color: #000;
  text-shadow: 0 0 3px #fff, 0 0 4px #fff;
  white-space: nowrap;
}

.stamp strong {
  padding-left: 2px;
  font-family: "Open Sans", "Noto Sans", sans-serif;
  font-size: 31px;
  font-style: italic;
  font-weight: 800;
  line-height: 38px;
}

.stamp .phone {
  padding: 8px 0 0 5px;
  font-size: 22px;
  line-height: 38px;
}

.stamp .mail {
  padding-left: 7px;
  font-size: 20px;
  line-height: 28px;
  color: #444;
}

/* formula bar */
.formula {
  flex: none;
  display: flex;
  height: 26px;
  margin-bottom: 3px;
  border: 1px solid #6b8fc4;
  border-width: 1px 0;
  background-color: #fff;
  color: #000;
}

.namebox {
  display: flex;
  align-items: center;
  width: 181px;
  padding-right: 7px;
}

.namebox input {
  flex: 1;
  width: 0;
  border: none;
  padding: 0 4px 0 0;
  text-align: center;
  font-size: 15px;
}

.fx {
  display: flex;
  align-items: center;
  justify-content: space-between;
  width: 101px;
  padding: 0 7px;
  border: 1px solid #7d9ac6;
  border-width: 0 1px 0 1px;
  border-radius: 13px 0 0 13px;
  background: linear-gradient(#dfe9f7, #a9c2e6);
}

.dot {
  width: 6px;
  height: 6px;
  border-radius: 50%;
  background-color: #8fa3c0;
}

.fx button {
  font-family: "Liberation Serif", serif;
  font-size: 18px;
  font-weight: bold;
  font-style: italic;
  color: #4a5568;
}

.fx sub {
  font-size: 12px;
}

.value {
  flex: 1;
  min-width: 0;
  border: none;
  padding: 0 9px;
  font-size: 16px;
}

.expand {
  width: 20px;
  border: 1px solid #7d9ac6;
  border-width: 0 1px;
  background: linear-gradient(#f2f6fc, #b8cdec);
}

/* sheet */
.work {
  flex: 1;
  min-height: 0;
  display: flex;
}

.sheet {
  flex: 1;
  min-width: 0;
  position: relative;
  overflow: hidden;
  background-color: #a0a0a0;
}

table {
  width: 1696px;
  table-layout: fixed;
  border-collapse: separate;
  border-spacing: 0;
  font-family: "Liberation Mono", monospace;
  font-size: 17px;
  line-height: 22px;
  color: #000;
}

.w-num {
  width: 35px;
}

.w-a {
  width: 81px;
}

.w-b {
  width: 454px;
}

.w-c {
  width: 82px;
}

.w-rest {
  width: 80px;
}

th {
  padding: 0;
  font-family: "Liberation Sans", sans-serif;
  font-weight: normal;
  color: #27413e;
}

thead th {
  height: 23px;
  line-height: 21px;
  border-top: 1px solid #6b8fc4;
  border-right: 1px solid #9eb6ce;
  border-bottom: 1px solid #9eb6ce;
  background: linear-gradient(#f6f9fd, #e4e9f4 50%, #d5def0);
}

thead .corner {
  background: linear-gradient(135deg, #a9c4e9 65%, #e9f0fa 65%);
}

thead .sel {
  background: linear-gradient(#f9d99f, #f7b85c);
  border-color: #f29536;
}

tbody tr {
  height: 24px;
}

tbody .first,
tbody .h22 {
  height: 22px;
}

tbody .h23 {
  height: 23px;
}

tbody .h32 {
  height: 32px;
}

tbody .h35 {
  height: 35px;
}

tbody .h47 {
  height: 47px;
  line-height: 23px;
}

tbody th {
  vertical-align: bottom;
  line-height: 19px;
  border-right: 1px solid #0000d0;
  border-bottom: 1px solid #9eb6ce;
  background-color: #e4ecf7;
}

tbody th.sel {
  background-color: #ffd58d;
  border-bottom-color: #f29536;
}

td {
  padding: 0 1px 0 3px;
  vertical-align: top;
  text-align: left;
  background-color: #fff;
  border-right: 1px solid #d0d7e5;
  border-bottom: 1px solid #d0d7e5;
}

td:last-child {
  border-right: 3px solid #0000d0;
}

tbody .first td {
  border-top: 1px solid #0000d0;
  line-height: 20px;
}

tbody .h22 td {
  line-height: 20px;
}

.title {
  font-family: "Liberation Sans", sans-serif;
  font-weight: bold;
}

.k {
  font-weight: bold;
  border-color: #000;
}

.v {
  border: 2px solid #000;
  border-width: 0 2px 2px 0;
}

.t {
  border-right-width: 2px;
  text-align: justify;
}

.left {
  padding-right: 0;
  text-align: left;
}

.oneline {
  white-space: nowrap;
}

.bb2 {
  border-bottom: 2px solid #000;
}

.br2 {
  border-right-width: 2px;
}

.variant {
  padding-left: 5px;
}

.head td {
  padding-top: 1px;
}

.nine {
  padding: 2px 0 0 6px;
  font-family: "Noto Sans", sans-serif;
  font-size: 21px;
  font-weight: 500;
  line-height: 26px;
}

.gray .k {
  background-color: #d3d2d3;
}

.green .k {
  background-color: #92d050;
}

td.active {
  position: relative;
}

.frame {
  position: absolute;
  inset: 0 -3px -2px 0;
  border: 1px solid #000;
  outline: 1px solid #fff;
  outline-offset: -2px;
}

.frame::after {
  content: "";
  position: absolute;
  right: -3px;
  bottom: -3px;
  width: 6px;
  height: 6px;
  border: 1px solid #000;
  border-radius: 50%;
  background-color: #fff;
}

.page-mark {
  position: absolute;
  left: 34px;
  top: 567px;
  width: 782px;
  text-align: center;
  font-family: "Liberation Sans", sans-serif;
  font-size: 48px;
  line-height: 56px;
  color: rgba(70, 70, 70, 0.5);
  pointer-events: none;
}

/* scroll bars */
.vscroll {
  flex: none;
  display: flex;
  flex-direction: column;
  width: 19px;
  background-color: #7ea1d6;
  border-left: 1px solid #b5cdf0;
}

.vscroll .split {
  height: 9px;
  border: 2px solid #6b8fc4;
  background-color: #fff;
}

.vscroll button {
  height: 22px;
}

.vscroll .thumb {
  flex: 207;
  border: 1px solid #5f80b5;
  background: repeating-linear-gradient(#7d8aa8 0 1px, transparent 1px 3px) center / 8px 8px no-repeat,
    linear-gradient(90deg, #f4f7fc 40%, #b9cbe8);
}

.vscroll .track {
  flex: 495;
}

.sheetbar {
  flex: none;
  display: flex;
  height: 21px;
  background-color: #9dbbe6;
  border-bottom: 1px solid #5f80b5;
}

.steps {
  display: flex;
  align-items: center;
  gap: 9px;
  width: 79px;
  padding-left: 5px;
  border-top: 1px solid #8aa9d6;
  border-right: 1px solid #8aa9d6;
  background-color: #c6dafa;
}

.leaves {
  display: flex;
}

.leaves a {
  position: relative;
  z-index: 0;
  width: 98px;
  padding-left: 10px;
  font-size: 14px;
  line-height: 20px;
  white-space: nowrap;
}

.leaves a::before {
  content: "";
  position: absolute;
  z-index: -1;
  inset: 0;
  border: 1px solid #7d9ac6;
  border-left: 2px solid #eef4fd;
  border-bottom: none;
  background: linear-gradient(#d5e4fb, #b9d2f7);
  transform: skewX(-37deg);
}

.leaves .active {
  width: 104px;
  padding-left: 9px;
  font-size: 15px;
  font-weight: bold;
  background-color: #fff;
}

.leaves .active::before {
  background: #fff;
  border-color: #fff;
}

.leaves .add {
  width: 34px;
  padding: 2px 0 0 5px;
}

.hscroll {
  flex: 1;
  display: flex;
  align-items: stretch;
  margin-left: 385px;
  padding-right: 20px;
  border-top: 1px solid #b5cdf0;
}

.hscroll .split {
  width: 8px;
  border: 2px solid #f2f6fc;
  background-color: #5f80b5;
}

.hscroll button {
  width: 21px;
  background-color: #7ea1d6;
}

.hscroll .thumb {
  flex: 522;
  border: 1px solid #54678f;
  background: repeating-linear-gradient(90deg, #7d8aa8 0 1px, transparent 1px 2px) center / 8px 6px no-repeat,
    linear-gradient(#f4f5f8, #dfe3ec 50%, #b6c4da);
}

.hscroll .track {
  flex: 81;
  background-color: #7ea1d6;
}

/* status bar */
.status {
  flex: none;
  display: flex;
  height: 26px;
  border-top: 2px solid #eef5ff;
  background: linear-gradient(#d3e4fc, #b5d0f8 50%, #cfe1fc);
  font-size: 13px;
}

.ready {
  flex: 1;
  padding-left: 7px;
  line-height: 22px;
  color: #1c2f55;
}

.zoom {
  display: flex;
  align-items: center;
  width: 294px;
  padding: 0 5px 0 2px;
  border-left: 2px solid #6b8fc4;
  background: linear-gradient(#b6d0f5, #7fa8e3);
}

.views {
  display: flex;
  border: 1px solid #5f80b5;
  border-radius: 2px;
  background-color: #cddcf3;
}

.views button {
  width: 22px;
  height: 21px;
}

.zoom label {
  width: 50px;
  text-align: center;
  color: #1c2f55;
}

.zoom input {
  flex: 1;
  min-width: 0;
  height: 20px;
  margin: 0;
  appearance: none;
  background: linear-gradient(#e3eefc, #e3eefc) center / 100% 1px no-repeat;
}

.zoom input::-webkit-slider-thumb {
  appearance: none;
  width: 11px;
  height: 16px;
  border: 1px solid #3d5a8e;
  border-radius: 2px 2px 6px 6px;
  background-color: #e6effc;
}

/* taskbar */
.taskbar {
  flex: none;
  display: flex;
  justify-content: space-between;
  height: 48px;
  padding-left: 17px;
  background: linear-gradient(175deg, #b8763c, #c07c3e 40%, #b7783f 70%, #c6803f);
  border-top: 1px solid #97673d;
  color: #fff;
}

.apps {
  display: flex;
  gap: 4px;
}

.apps button {
  width: 66px;
  height: 47px;
}

.apps .open {
  border: 1px solid #dcb896;
  background-color: #c89a72;
}

.apps .multi {
  border-right: 9px double #dcb896;
}

.apps .front {
  border-color: #fff;
  background-color: #d3b195;
}

.tray {
  display: flex;
  align-items: center;
  gap: 10px;
  padding-right: 28px;
}

.lang {
  padding: 0 10px 0 7px;
  font-size: 14px;
}

.clock {
  display: flex;
  flex-direction: column;
  align-items: center;
  font-size: 14px;
  line-height: 22px;
}
```
